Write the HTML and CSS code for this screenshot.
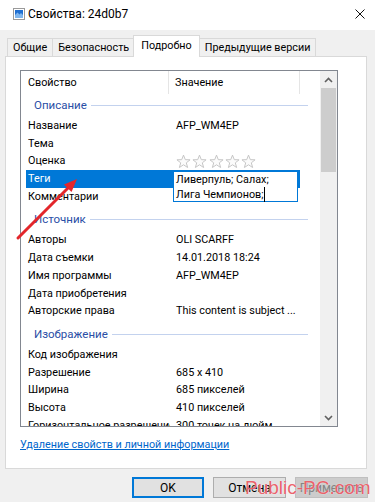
FILE: index.html
```html
<!DOCTYPE html>
<html lang="ru">
<head>
    <meta charset="UTF-8">
    <meta name="viewport" content="width=device-width, initial-scale=1.0">
    <title>Свойства: 24d0b7</title>
    <link rel="stylesheet" href="styles.css">
</head>
<body>
    <div class="titlebar">
        <svg class="title-icon" width="12" height="12" viewBox="0 0 12 12">
            <rect x="0.5" y="0.5" width="11" height="11" fill="#fff" stroke="#9a9a9a"/>
            <rect x="2" y="2" width="8" height="8" fill="#1f6fd1"/>
            <path d="M2 7 L4.5 4.5 L6.5 6.5 L8 5 L10 7 L10 10 L2 10 Z" fill="#7fb6ee"/>
        </svg>
        <span class="title">Свойства: 24d0b7</span>
        <svg class="close" width="10" height="10" viewBox="0 0 10 10">
            <path d="M0.5 0.5 L9.5 9.5 M9.5 0.5 L0.5 9.5" stroke="#111" stroke-width="1"/>
        </svg>
    </div>

    <div class="tabs">
        <div class="tab">Общие</div>
        <div class="tab">Безопасность</div>
        <div class="tab active">Подробно</div>
        <div class="tab">Предыдущие версии</div>
    </div>

    <div class="panel">
        <div class="listview">
            <div class="list">
                <div class="list-head">
                    <div class="head-cell">Свойство</div>
                    <div class="head-cell">Значение</div>
                    <div class="head-cell"></div>
                </div>

                <div class="group first"><span>Описание</span></div>
                <div class="row"><span class="name">Название</span><span class="value">AFP_WM4EP</span></div>
                <div class="row"><span class="name">Тема</span><span class="value"></span></div>
                <div class="row">
                    <span class="name">Оценка</span>
                    <span class="value stars">
                        <svg viewBox="0 0 16 16"><path d="M8 1.2 L9.9 6 L15 6.2 L11 9.4 L12.4 14.4 L8 11.5 L3.6 14.4 L5 9.4 L1 6.2 L6.1 6 Z"/></svg>
                        <svg viewBox="0 0 16 16"><path d="M8 1.2 L9.9 6 L15 6.2 L11 9.4 L12.4 14.4 L8 11.5 L3.6 14.4 L5 9.4 L1 6.2 L6.1 6 Z"/></svg>
                        <svg viewBox="0 0 16 16"><path d="M8 1.2 L9.9 6 L15 6.2 L11 9.4 L12.4 14.4 L8 11.5 L3.6 14.4 L5 9.4 L1 6.2 L6.1 6 Z"/></svg>
                        <svg viewBox="0 0 16 16"><path d="M8 1.2 L9.9 6 L15 6.2 L11 9.4 L12.4 14.4 L8 11.5 L3.6 14.4 L5 9.4 L1 6.2 L6.1 6 Z"/></svg>
                        <svg viewBox="0 0 16 16"><path d="M8 1.2 L9.9 6 L15 6.2 L11 9.4 L12.4 14.4 L8 11.5 L3.6 14.4 L5 9.4 L1 6.2 L6.1 6 Z"/></svg>
                    </span>
                </div>
                <div class="row selected">
                    <span class="name">Теги</span>
                    <span class="value">
                        <span class="editbox">Ливерпуль; Салах;<br>Лига Чемпионов;<span class="caret"></span></span>
                    </span>
                </div>
                <div class="row"><span class="name">Комментарии</span><span class="value"></span></div>

                <div class="group"><span>Источник</span></div>
                <div class="row"><span class="name">Авторы</span><span class="value">OLI SCARFF</span></div>
                <div class="row"><span class="name">Дата съемки</span><span class="value">14.01.2018 18:24</span></div>
                <div class="row"><span class="name">Имя программы</span><span class="value">AFP_WM4EP</span></div>
                <div class="row"><span class="name">Дата приобретения</span><span class="value"></span></div>
                <div class="row"><span class="name">Авторские права</span><span class="value">This content is subject ...</span></div>

                <div class="group"><span>Изображение</span></div>
                <div class="row"><span class="name">Код изображения</span><span class="value"></span></div>
                <div class="row"><span class="name">Разрешение</span><span class="value">685 x 410</span></div>
                <div class="row"><span class="name">Ширина</span><span class="value">685 пикселей</span></div>
                <div class="row"><span class="name">Высота</span><span class="value">410 пикселей</span></div>
                <div class="row"><span class="name">Горизонтальное разрешение</span><span class="value">300 точек на дюйм</span></div>
            </div>

            <div class="scrollbar">
                <div class="sb-btn">
                    <svg width="9" height="6" viewBox="0 0 9 6"><path d="M1 5 L4.5 1.5 L8 5" fill="none" stroke="#606060" stroke-width="1.6"/></svg>
                </div>
                <div class="sb-thumb"></div>
                <div class="sb-track"></div>
                <div class="sb-btn">
                    <svg width="9" height="6" viewBox="0 0 9 6"><path d="M1 1 L4.5 4.5 L8 1" fill="none" stroke="#606060" stroke-width="1.6"/></svg>
                </div>
            </div>
        </div>

        <a class="remove-link" href="#">Удаление свойств и личной информации</a>
    </div>

    <div class="buttons">
        <button class="btn default">OK</button>
        <button class="btn">Отмена</button>
        <button class="btn" disabled>Применить</button>
    </div>

    <!-- overlays from the screenshot -->
    <svg class="arrow" width="375" height="502" viewBox="0 0 375 502">
        <line x1="18" y1="238" x2="68" y2="188" stroke="#e3262b" stroke-width="3" stroke-linecap="round"/>
        <polygon points="77,179 71.5,192 64,184.5" fill="#e3262b"/>
    </svg>
    <span class="watermark">Public-PC.com</span>
</body>
</html>
```

FILE: styles.css
```css
body {
    margin: 0;
    width: 375px;
    height: 502px;
    overflow: hidden;
    position: relative;
    background-color: #f0f0f0;
    font-family: Roboto, "Noto Sans", Arial, sans-serif;
    font-size: 10.8px;
    color: #000;
}

/* title bar */
.titlebar {
    height: 30px;
    background-color: #fff;
    display: flex;
    align-items: center;
    padding: 0 10px 0 13px;
}
.title-icon {
    margin-top: -2px;
}
.title {
    margin-left: 3px;
    font-size: 12px;
    margin-top: -3px;
    flex: 1;
}
.close {
    margin-top: -3px;
}

/* tabs */
.tabs {
    display: flex;
    align-items: flex-end;
    height: 21px;
    padding: 5px 0 0 7px;
}
.tab {
    height: 17px;
    line-height: 18px;
    padding: 0 5px;
    border: 1px solid #d9d9d9;
    border-bottom: none;
    margin-right: -1px;
    background-color: #f0f0f0;
    position: relative;
}
.tab.active {
    height: 21px;
    line-height: 19px;
    padding: 0 7px;
    margin: 0 -1px -1px -1px;
    background-color: #fff;
    z-index: 1;
}

/* panel */
.panel {
    margin: 0 8px 0 5px;
    border: 1px solid #d9d9d9;
    background-color: #fff;
    padding: 13px 28px 15px 14px;
    display: flex;
    flex-direction: column;
}
.listview {
    height: 355px;
    border: 1px solid #828790;
    display: flex;
}
.list {
    flex: 1;
    overflow: hidden;
}
.list-head {
    display: grid;
    grid-template-columns: 148px 131px 1fr;
    height: 25px;
}
.head-cell {
    line-height: 24px;
    padding-left: 7px;
    border-right: 1px solid #e5e5e5;
    height: 23px;
}
.head-cell:nth-child(2) {
    padding-left: 6px;
}
.head-cell:last-child {
    border-right: none;
}

.group {
    height: 21px;
    margin-top: 5px;
    padding: 0 12px 0 13px;
    display: flex;
    align-items: flex-start;
    color: #2a4ea6;
    font-size: 11.5px;
}
.group.first {
    margin-top: 0;
}
.group span {
    line-height: 19px;
    display: flex;
    align-items: center;
    flex: 1;
    gap: 4px;
}
.group span::after {
    content: "";
    flex: 1;
    height: 1px;
    background-color: #c3d2ee;
}

.row {
    display: grid;
    grid-template-columns: 144px 130px;
    height: 17.7px;
    line-height: 17.7px;
    margin-left: 5px;
    white-space: nowrap;
}
.row .name {
    padding-left: 2px;
    overflow: hidden;
}
.row .value {
    padding-left: 6px;
    position: relative;
}
.row.selected .name,
.row.selected .value {
    background-color: #0078d7;
    color: #fff;
}

.stars {
    display: flex;
    align-items: center;
    gap: 1.3px;
}
.stars svg {
    width: 15px;
    height: 15px;
    fill: #fbfbfb;
    stroke: #c2c2c2;
    stroke-width: 1;
}

.editbox {
    position: absolute;
    left: 3px;
    top: 1px;
    width: 121px;
    height: 29px;
    padding-left: 2px;
    border: 1px solid #0078d7;
    background-color: #fff;
    color: #000;
    line-height: 15px;
    z-index: 1;
}
.caret {
    display: inline-block;
    width: 1px;
    height: 15px;
    background-color: #000;
    vertical-align: top;
}

/* scrollbar */
.scrollbar {
    width: 17px;
    background-color: #f0f0f0;
    display: flex;
    flex-direction: column;
}
.sb-btn {
    height: 17px;
    display: flex;
    align-items: center;
    justify-content: center;
}
.sb-thumb {
    height: 84px;
    margin: 0 1px;
    background-color: #cdcdcd;
}
.sb-track {
    flex: 1;
}

.remove-link {
    margin-top: 10px;
    line-height: 16px;
    color: #0066cc;
    align-self: flex-start;
}

/* dialog buttons */
.buttons {
    display: flex;
    justify-content: flex-end;
    gap: 9px;
    padding: 8px 7px 0 0;
}
.btn {
    width: 73px;
    height: 21px;
    font-family: inherit;
    font-size: 12px;
    background-color: #e1e1e1;
    border: 1px solid #adadad;
    color: #000;
    padding: 0;
}
.btn.default {
    width: 72px;
    border: 2px solid #0078d7;
}
.btn:disabled {
    background-color: #cccccc;
    border-color: #bfbfbf;
    color: #838383;
}

.arrow {
    position: absolute;
    left: 0;
    top: 0;
    pointer-events: none;
}
.watermark {
    position: absolute;
    left: 245px;
    top: 477px;
    font-family: "Liberation Sans", Arial, sans-serif;
    font-size: 19px;
    color: rgba(229, 57, 70, 0.8);
    text-shadow: 0 0 1px #fff;
}
```
